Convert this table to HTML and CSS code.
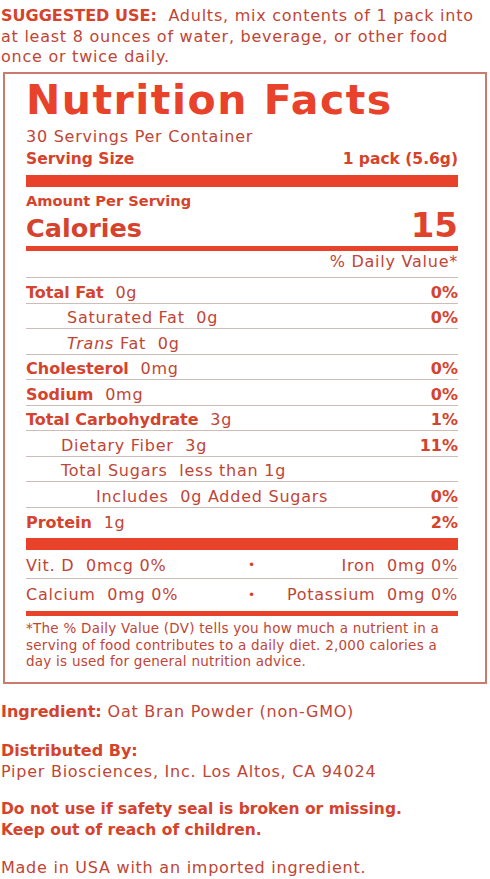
FILE: index.html
```html
<!DOCTYPE html>
<html lang="en">
<head>
  <meta charset="UTF-8">
  <title>Nutrition Facts</title>
  <link rel="stylesheet" href="styles.css">
</head>
<body>
<p class="use"><b>SUGGESTED USE:</b>&nbsp; Adults, mix contents of 1 pack into at least 8 ounces of water, beverage, or other food once or twice daily.</p>

<div class="label">
  <h1>Nutrition Facts</h1>
  <div class="servings">30 Servings Per Container</div>
  <div class="size"><span>Serving Size</span><span>1 pack (5.6g)</span></div>
  <div class="bar thick"></div>
  <div class="amount">Amount Per Serving</div>
  <div class="calories"><span>Calories</span><span class="num">15</span></div>
  <div class="bar medium"></div>
  <div class="dv">% Daily Value*</div>

  <div class="row"><span><b>Total Fat</b>&nbsp; 0g</span><b>0%</b></div>
  <div class="row in1"><span>Saturated Fat&nbsp; 0g</span><b>0%</b></div>
  <div class="row in1"><span><i>Trans</i> Fat&nbsp; 0g</span></div>
  <div class="row"><span><b>Cholesterol</b>&nbsp; 0mg</span><b>0%</b></div>
  <div class="row"><span><b>Sodium</b>&nbsp; 0mg</span><b>0%</b></div>
  <div class="row"><span><b>Total Carbohydrate</b>&nbsp; 3g</span><b>1%</b></div>
  <div class="row in1b"><span>Dietary Fiber&nbsp; 3g</span><b>11%</b></div>
  <div class="row in1b"><span>Total Sugars&nbsp; less than 1g</span></div>
  <div class="row in2"><span>Includes&nbsp; 0g Added Sugars</span><b>0%</b></div>
  <div class="row last"><span><b>Protein</b>&nbsp; 1g</span><b>2%</b></div>
  <div class="bar thick"></div>

  <div class="vit"><span>Vit. D&nbsp; 0mcg 0%</span><span class="dot">&bull;</span><span class="r">Iron&nbsp; 0mg 0%</span></div>
  <div class="vit last"><span>Calcium&nbsp; 0mg 0%</span><span class="dot">&bull;</span><span class="r">Potassium&nbsp; 0mg 0%</span></div>
  <div class="bar small"></div>

  <p class="note">*The % Daily Value (DV) tells you how much a nutrient in a serving of food contributes to a daily diet. 2,000 calories a day is used for general nutrition advice.</p>
</div>

<p class="info first"><b>Ingredient:</b> Oat Bran Powder (non-GMO)</p>
<p class="info"><b>Distributed By:</b><br>Piper Biosciences, Inc. Los Altos, CA 94024</p>
<p class="info warn"><b>Do not use if safety seal is broken or missing.<br>Keep out of reach of children.</b></p>
<p class="info made">Made in USA with an imported ingredient.</p>
</body>
</html>
```

FILE: styles.css
```css
* {
  margin: 0;
  padding: 0;
  box-sizing: border-box;
}

body {
  width: 490px;
  font-family: "DejaVu Sans", "Noto Sans", sans-serif;
  font-size: 16px;
  letter-spacing: 0.75px;
  color: #bf4536;
  background: #fff;
  padding: 6px 0 0 1px;
}

b {
  color: #d5432c;
  letter-spacing: 0;
}

.use {
  line-height: 20.5px;
  padding-right: 8px;
}

/* 营养成分表 */
.label {
  margin: 4px 0 0 2px;
  width: 484px;
  border: 2px solid #cb7a6f;
  padding: 1px 27px 12px 21px;
}

.label h1 {
  font-size: 41px;
  font-weight: bold;
  color: #e8432a;
  line-height: 50px;
  letter-spacing: 1.5px;
}

.servings {
  line-height: 23px;
}

.size,
.calories,
.row {
  display: flex;
  justify-content: space-between;
}

.size {
  font-size: 15.5px;
  font-weight: bold;
  letter-spacing: 0;
  color: #d5432c;
  line-height: 23px;
}

.bar {
  background: #e8432a;
}

.bar.thick {
  height: 12px;
  margin-top: 4.5px;
}

.bar.medium {
  height: 5px;
  margin-top: 2px;
}

.bar.small {
  height: 5px;
}

.amount {
  font-weight: bold;
  letter-spacing: 0;
  color: #d5432c;
  font-size: 14.6px;
  line-height: 18px;
  margin-top: 5px;
}

.calories {
  font-weight: bold;
  letter-spacing: 0;
  color: #d5432c;
  font-size: 25.5px;
  line-height: 30px;
  margin-top: -4px;
  height: 38px;
  align-items: baseline;
}

.calories .num {
  font-size: 34px;
  line-height: 38px;
  color: #e0432b;
}

.dv {
  text-align: right;
  line-height: 22px;
  border-bottom: 1px solid #cdbdb6;
  padding-bottom: 4px;
}

.row {
  height: 25.5px;
  line-height: 20px;
  align-items: flex-end;
  border-bottom: 1px solid #cdbdb6;
}

.row.last {
  border-bottom: none;
}

.row.in1 {
  padding-left: 41px;
}

.row.in1b {
  padding-left: 35px;
}

.row.in2 {
  padding-left: 70px;
}

.vit {
  display: grid;
  grid-template-columns: 1fr auto 1fr;
  align-items: center;
  height: 29px;
  padding-top: 3px;
  border-bottom: 1px solid #cdbdb6;
}

.vit.last {
  height: 32px;
  padding-top: 0;
  border-bottom: none;
}

.vit .dot {
  color: #d5432c;
  font-size: 12px;
  margin-left: 20px;
}

.vit .r {
  text-align: right;
}

.note {
  font-size: 13.5px;
  letter-spacing: 0.25px;
  line-height: 16.5px;
  margin-top: 4.5px;
}

.info {
  line-height: 21px;
  margin-top: 18px;
}

.info.first {
  margin-top: 17.5px;
}

.info.warn {
  font-size: 15.5px;
  margin-top: 17px;
}

.info.made {
  margin-top: 16px;
}
```
